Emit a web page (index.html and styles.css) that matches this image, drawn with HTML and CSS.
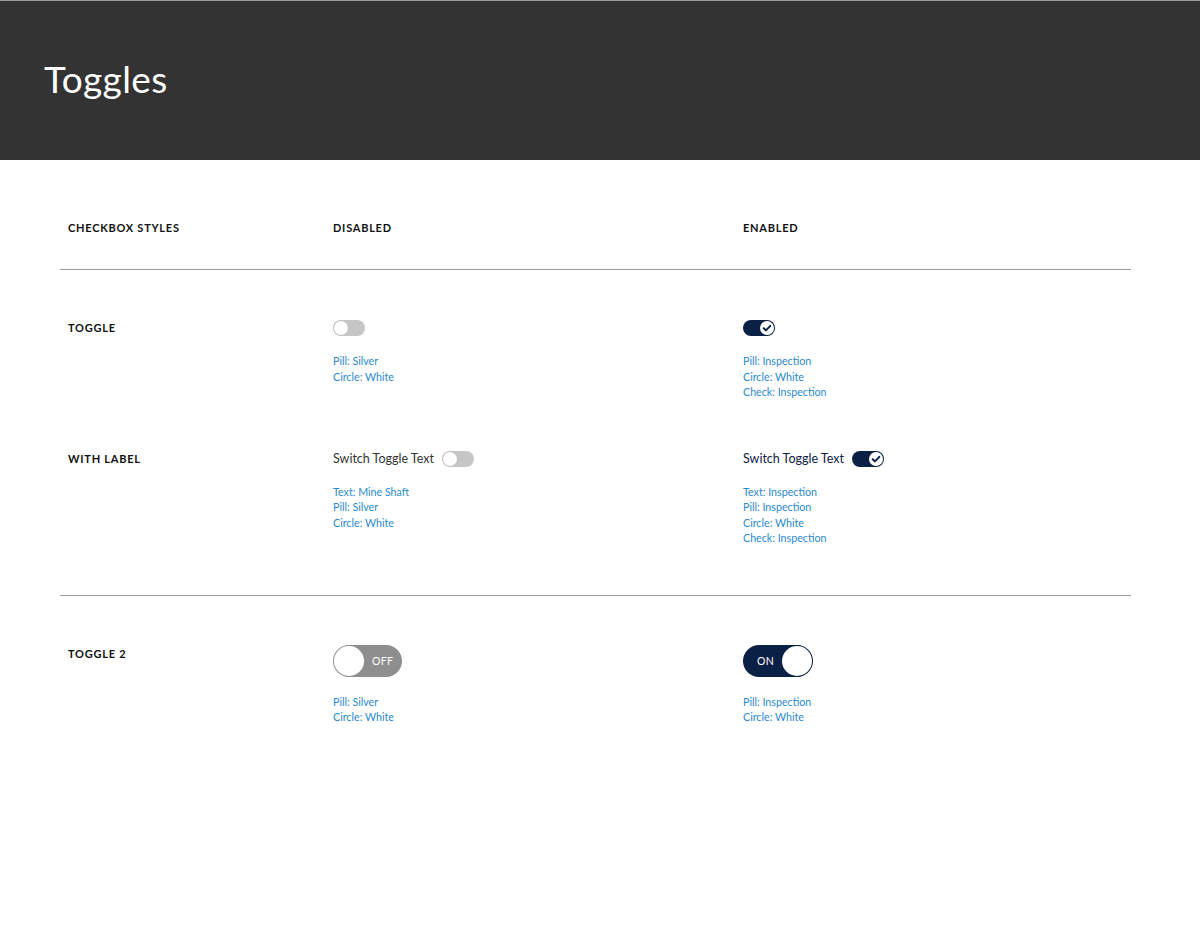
FILE: index.html
```html
<!DOCTYPE html>
<html lang="en">
<head>
<meta charset="utf-8">
<title>Toggles</title>
<link rel="stylesheet" href="styles.css">
</head>
<body>
<header class="page-header">
  <h1 class="page-title">Toggles</h1>
</header>
<main class="content">
  <div class="grid head-row">
    <div class="cell head">CHECKBOX STYLES</div>
    <div class="cell head">DISABLED</div>
    <div class="cell head">ENABLED</div>
  </div>

  <section class="section section-a">
    <div class="grid row">
      <div class="cell head">TOGGLE</div>
      <div class="cell">
        <span class="sw"><span class="knob"></span></span>
        <ul class="notes">
          <li>Pill: Silver</li>
          <li>Circle: White</li>
        </ul>
      </div>
      <div class="cell">
        <span class="sw on"><span class="knob"><svg viewBox="0 0 14 14" class="check"><path d="M3.7 7.2l2.2 2.2 4.4-4.5"/></svg></span></span>
        <ul class="notes">
          <li>Pill: Inspection</li>
          <li>Circle: White</li>
          <li>Check: Inspection</li>
        </ul>
      </div>
    </div>

    <div class="grid row">
      <div class="cell head">WITH LABEL</div>
      <div class="cell">
        <label class="labeled"><span class="lbl">Switch Toggle Text</span><span class="sw"><span class="knob"></span></span></label>
        <ul class="notes">
          <li>Text: Mine Shaft</li>
          <li>Pill: Silver</li>
          <li>Circle: White</li>
        </ul>
      </div>
      <div class="cell">
        <label class="labeled"><span class="lbl lbl-on">Switch Toggle Text</span><span class="sw on"><span class="knob"><svg viewBox="0 0 14 14" class="check"><path d="M3.7 7.2l2.2 2.2 4.4-4.5"/></svg></span></span></label>
        <ul class="notes">
          <li>Text: Inspection</li>
          <li>Pill: Inspection</li>
          <li>Circle: White</li>
          <li>Check: Inspection</li>
        </ul>
      </div>
    </div>
  </section>

  <section class="section section-b">
    <div class="grid row">
      <div class="cell head head2">TOGGLE 2</div>
      <div class="cell">
        <span class="sw2"><span class="knob2"></span><span class="sw2-text">OFF</span></span>
        <ul class="notes notes2">
          <li>Pill: Silver</li>
          <li>Circle: White</li>
        </ul>
      </div>
      <div class="cell">
        <span class="sw2 on"><span class="sw2-text">ON</span><span class="knob2"></span></span>
        <ul class="notes notes2">
          <li>Pill: Inspection</li>
          <li>Circle: White</li>
        </ul>
      </div>
    </div>
  </section>
</main>
</body>
</html>
```
FILE: styles.css
```css
* { box-sizing: border-box; }
html, body { margin: 0; padding: 0; background: #fff; }
body { font-family: Lato, "Open Sans", sans-serif; color: #111; }

.page-header {
  height: 160px;
  background: #333333;
  border-top: 1px solid #9a9a9a;
  display: flex;
  align-items: center;
  padding-left: 44px;
}
.page-title {
  margin: 0 0 4px;
  font-family: Lato, sans-serif;
  font-weight: 400;
  font-size: 37px;
  color: #fff;
  letter-spacing: 0.4px;
}

.content {
  width: 1071px;
  margin-left: 60px;
}
.grid {
  display: grid;
  grid-template-columns: 273px 410px 1fr;
  align-items: start;
}
.cell { padding-left: 8px; }
.cell + .cell { padding-left: 0; }

.head {
  font-size: 11px;
  font-weight: 700;
  line-height: 16px;
  letter-spacing: 0.75px;
  color: #111;
}
.head2 { margin-top: 1px; }
.head-row {
  padding: 60px 0 33px;
  border-bottom: 1px solid #9b9b9b;
}

.section {
  border-bottom: 1px solid #9b9b9b;
}
.section-a { padding: 50px 0 49px; }
.section-b { padding: 49px 0 40px; border-bottom: 0; }
.row + .row { margin-top: 51px; }

.notes {
  list-style: none;
  margin: 17px 0 0;
  padding: 0;
  font-size: 10.7px;
  line-height: 15.5px;
  color: #2a8ad0;
}
.notes2 { margin-top: 17px; }

/* small switch */
.sw {
  display: flex;
  align-items: center;
  width: 32px;
  height: 16px;
  border-radius: 8px;
  background: #c6c6c6;
  padding: 1px;
}
.sw .knob {
  width: 14px;
  height: 14px;
  border-radius: 50%;
  background: #fff;
  box-shadow: 0 0 0 0.5px #b5b5b5;
  display: flex;
  align-items: center;
  justify-content: center;
}
.sw.on {
  background: #0b2045;
  justify-content: flex-end;
}
.sw.on .knob { box-shadow: none; }
.check {
  width: 14px;
  height: 14px;
  fill: none;
  stroke: #0b2045;
  stroke-width: 2;
  stroke-linecap: round;
  stroke-linejoin: round;
}

.labeled {
  display: flex;
  align-items: center;
  gap: 8px;
}
.lbl {
  font-size: 12.5px;
  line-height: 16px;
  color: #333;
}
.lbl-on { color: #0b2045; }

/* large switch */
.sw2 {
  display: flex;
  align-items: center;
  width: 69px;
  height: 32px;
  border-radius: 16px;
  background: #8e8e8e;
  padding: 1px;
  gap: 8px;
}
.knob2 {
  width: 30px;
  height: 30px;
  border-radius: 50%;
  background: #fff;
  box-shadow: 0 0 0 0.5px #9a9a9a;
  flex: none;
}
.sw2-text {
  font-size: 10.5px;
  color: #fff;
  letter-spacing: 0.3px;
}
.sw2.on {
  background: #0b2045;
  justify-content: space-between;
  padding-left: 14px;
}
.sw2.on .knob2 { box-shadow: 0 0 0 1px #0b2045; }
```
